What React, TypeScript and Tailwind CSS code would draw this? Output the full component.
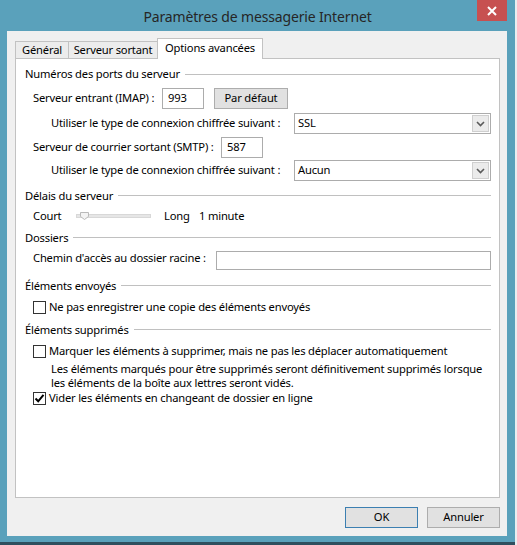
import React from "react";

function Header({ title, cls }: { title: string; cls: string }) {
  return (
    <div className={"flex items-center h-[14px] " + cls}>
      <span className="whitespace-nowrap">{title}</span>
      <div className="flex-1 ml-[5px] h-px bg-[#c0c0c0] mt-[-1px]" />
    </div>
  );
}

function Chevron() {
  return (
    <svg width="9" height="6" viewBox="0 0 9 6">
      <path d="M1 1 L4.5 4.5 L8 1" fill="none" stroke="#5a5a5a" strokeWidth="1.6" />
    </svg>
  );
}

function Select({ value }: { value: string }) {
  return (
    <div className="w-[197px] h-[21px] border border-[#acacac] bg-white flex items-center pl-[3px]">
      <span className="flex-1">{value}</span>
      <div className="w-[17px] h-[17px] mr-[1px] bg-[#ebebeb] border border-[#cfcfcf] flex items-center justify-center">
        <Chevron />
      </div>
    </div>
  );
}

function Check({ checked }: { checked?: boolean }) {
  return (
    <div className="w-[13px] h-[13px] border border-[#333333] bg-white flex items-center justify-center shrink-0">
      {checked && (
        <svg width="11" height="11" viewBox="0 0 11 11">
          <path d="M1.5 5.5 L4.2 8.3 L9.5 1.8" fill="none" stroke="#000" strokeWidth="2" />
        </svg>
      )}
    </div>
  );
}

export default function App() {
  return (
    <div className="w-[517px] h-[545px] flex bg-[#eef3f5] font-['Noto_Sans',sans-serif] text-[11.2px] tracking-[-0.19px] text-black overflow-hidden">
      <div className="w-[515px] h-[545px] flex flex-col bg-[#5aa1bb]">
        {/* title bar */}
        <div className="relative h-[31px] flex items-center justify-center shrink-0">
          <span className="text-[14px] tracking-[-0.15px] text-[#262626] mt-[1px]">Paramètres de messagerie Internet</span>
          <div className="absolute right-[8px] top-0 w-[30px] h-[21px] bg-[#c75050] flex items-center justify-center">
            <svg width="10" height="10" viewBox="0 0 10 10">
              <path d="M1 1 L9 9 M9 1 L1 9" stroke="#fff" strokeWidth="2" />
            </svg>
          </div>
        </div>
        {/* content */}
        <div className="ml-[7px] w-[500px] h-[505px] bg-[#f0f0f0] flex flex-col pl-[8px] pr-[7px] pt-[7px] shrink-0">
          {/* tabs */}
          <div className="flex items-end h-[20px] relative z-10">
            <div className="w-[54px] h-[17px] border border-[#c2c2c2] border-b-0 bg-[#ececec] flex items-center justify-center">
              Général
            </div>
            <div className="-ml-px w-[90px] h-[17px] border border-[#c2c2c2] border-b-0 bg-[#ececec] flex items-center justify-center">
              Serveur sortant
            </div>
            <div className="-ml-px w-[106px] h-[21px] -mb-px border border-[#c2c2c2] border-b-0 bg-white flex items-center justify-center pb-[1px]">
              Options avancées
            </div>
          </div>
          {/* panel */}
          <div className="w-[485px] h-[440px] border border-[#c2c2c2] bg-white flex flex-col pl-[9px] pr-[8px] pt-[8px]">
            <Header title="Numéros des ports du serveur" cls="h-[15px]" />
            <div className="flex items-center h-[22px] mt-[5px] pl-[8px]">
              <span className="w-[129px] whitespace-nowrap">Serveur entrant (IMAP) :</span>
              <div className="w-[42px] h-[21px] border border-[#acacac] bg-white flex items-center pl-[5px]">993</div>
              <div className="ml-[10px] w-[74px] h-[21px] border border-[#adadad] bg-[#e1e1e1] flex items-center justify-center">
                Par défaut
              </div>
            </div>
            <div className="flex items-center h-[23px] mt-[3px] pl-[26px]">
              <span className="w-[243px] whitespace-nowrap">Utiliser le type de connexion chiffrée suivant :</span>
              <Select value="SSL" />
            </div>
            <div className="flex items-center h-[23px] mt-[1px] pl-[8px]">
              <span className="w-[188px] whitespace-nowrap">Serveur de courrier sortant (SMTP) :</span>
              <div className="w-[42px] h-[21px] border border-[#acacac] bg-white flex items-center pl-[5px]">587</div>
            </div>
            <div className="flex items-center h-[23px] pl-[26px]">
              <span className="w-[243px] whitespace-nowrap">Utiliser le type de connexion chiffrée suivant :</span>
              <Select value="Aucun" />
            </div>

            <Header title="Délais du serveur" cls="mt-[7px]" />
            <div className="flex items-center h-[16px] mt-[5px] pl-[8px]">
              <span className="w-[43px]">Court</span>
              <svg width="76" height="12" viewBox="0 0 76 12" className="shrink-0">
                <rect x="0.5" y="4.5" width="74" height="3" fill="#e6e6e6" stroke="#d8d8d8" />
                <path d="M4.5 2.5 H12.5 V6.5 L8.5 9.5 L4.5 6.5 Z" fill="#f3f3f3" stroke="#b9b9b9" />
              </svg>
              <span className="ml-[12px] w-[35px]">Long</span>
              <span>1 minute</span>
            </div>

            <Header title="Dossiers" cls="mt-[7px]" />
            <div className="flex items-center h-[21px] mt-[5px] pl-[8px]">
              <span className="w-[184px] whitespace-nowrap mt-[-4px]">Chemin d'accès au dossier racine :</span>
              <div className="w-[276px] h-[19px] border border-[#acacac] bg-white" />
            </div>

            <Header title="Éléments envoyés" cls="mt-[8px]" />
            <div className="flex items-center h-[14px] mt-[7px] pl-[8px]">
              <Check />
              <span className="ml-[3px] whitespace-nowrap">Ne pas enregistrer une copie des éléments envoyés</span>
            </div>

            <Header title="Éléments supprimés" cls="mt-[9px]" />
            <div className="flex items-center h-[14px] mt-[7px] pl-[8px]">
              <Check />
              <span className="ml-[3px] whitespace-nowrap">
                Marquer les éléments à supprimer, mais ne pas les déplacer automatiquement
              </span>
            </div>
            <div className="mt-[4px] pl-[26px] leading-[14px]">
              <div className="whitespace-nowrap">
                Les éléments marqués pour être supprimés seront définitivement supprimés lorsque
              </div>
              <div className="whitespace-nowrap">les éléments de la boîte aux lettres seront vidés.</div>
            </div>
            <div className="flex items-center h-[14px] mt-[1px] pl-[8px]">
              <Check checked />
              <span className="ml-[3px] whitespace-nowrap">Vider les éléments en changeant de dossier en ligne</span>
            </div>
          </div>
          {/* buttons */}
          <div className="flex justify-end gap-[9px] mt-[9px]">
            <div className="w-[73px] h-[21px] border border-[#3c7fb1] bg-[#e1e1e1] flex items-center justify-center">
              OK
            </div>
            <div className="w-[73px] h-[21px] border border-[#adadad] bg-[#e1e1e1] flex items-center justify-center">
              Annuler
            </div>
          </div>
        </div>
        <div className="h-[6px] shrink-0" />
        <div className="h-[3px] bg-[#2f4f5e] shrink-0" />
      </div>
      <div className="w-[2px] h-[545px] bg-[#e9eef0]" />
    </div>
  );
}
